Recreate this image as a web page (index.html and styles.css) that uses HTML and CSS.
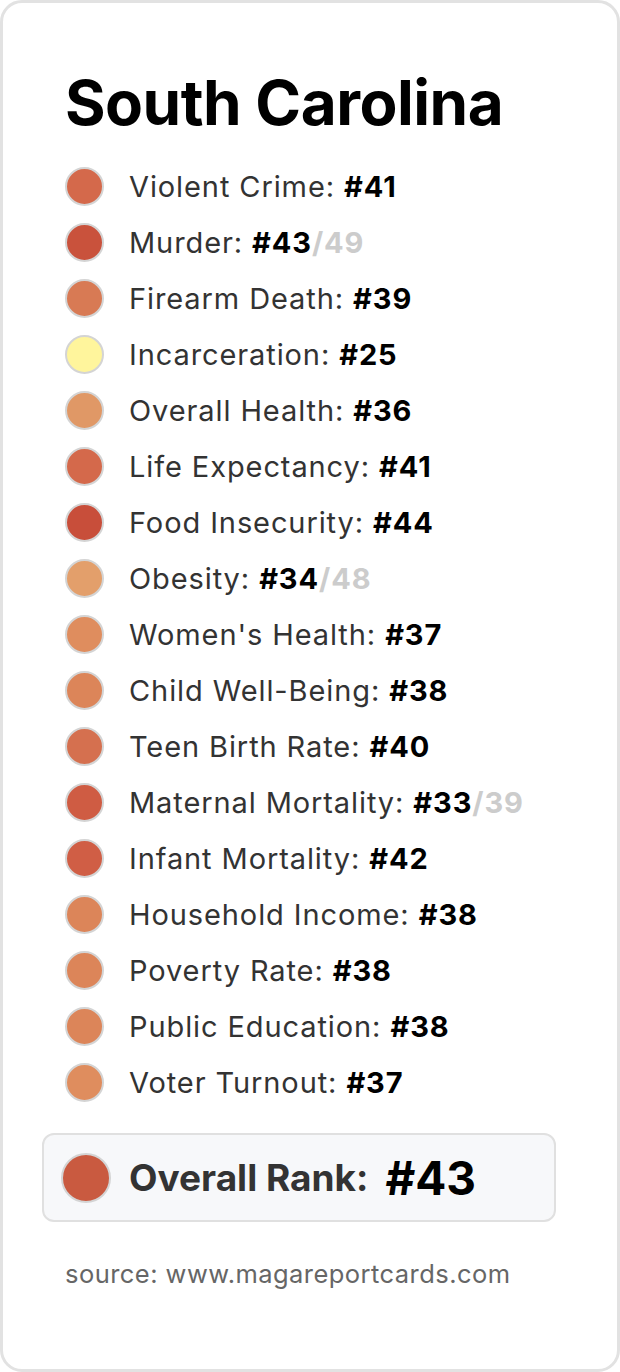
FILE: index.html
```html
<!DOCTYPE html>
<html lang="en">
<head>
<meta charset="utf-8">
<title>South Carolina</title>
<link rel="stylesheet" href="styles.css">
</head>
<body>
<div class="card">
  <h1 class="title">South Carolina</h1>
  <ul class="list">
    <li class="row"><span class="dot" style="background:#d4694b"></span><span class="label">Violent Crime: <b>#41</b></span></li>
    <li class="row"><span class="dot" style="background:#c9523c"></span><span class="label">Murder: <b>#43</b><span class="of">/49</span></span></li>
    <li class="row"><span class="dot" style="background:#d87a54"></span><span class="label">Firearm Death: <b>#39</b></span></li>
    <li class="row"><span class="dot" style="background:#fff59c"></span><span class="label">Incarceration: <b>#25</b></span></li>
    <li class="row"><span class="dot" style="background:#e09866"></span><span class="label">Overall Health: <b>#36</b></span></li>
    <li class="row"><span class="dot" style="background:#d4694b"></span><span class="label">Life Expectancy: <b>#41</b></span></li>
    <li class="row"><span class="dot" style="background:#c84e3a"></span><span class="label">Food Insecurity: <b>#44</b></span></li>
    <li class="row"><span class="dot" style="background:#e39f6b"></span><span class="label">Obesity: <b>#34</b><span class="of">/48</span></span></li>
    <li class="row"><span class="dot" style="background:#df8d5e"></span><span class="label">Women's Health: <b>#37</b></span></li>
    <li class="row"><span class="dot" style="background:#dc8559"></span><span class="label">Child Well-Being: <b>#38</b></span></li>
    <li class="row"><span class="dot" style="background:#d5704f"></span><span class="label">Teen Birth Rate: <b>#40</b></span></li>
    <li class="row"><span class="dot" style="background:#cf5c43"></span><span class="label">Maternal Mortality: <b>#33</b><span class="of">/39</span></span></li>
    <li class="row"><span class="dot" style="background:#d05e45"></span><span class="label">Infant Mortality: <b>#42</b></span></li>
    <li class="row"><span class="dot" style="background:#dc8559"></span><span class="label">Household Income: <b>#38</b></span></li>
    <li class="row"><span class="dot" style="background:#dc8559"></span><span class="label">Poverty Rate: <b>#38</b></span></li>
    <li class="row"><span class="dot" style="background:#dc8559"></span><span class="label">Public Education: <b>#38</b></span></li>
    <li class="row"><span class="dot" style="background:#df8d5e"></span><span class="label">Voter Turnout: <b>#37</b></span></li>
  </ul>
  <div class="overall">
    <span class="dot dot-lg" style="background:#c95a40"></span>
    <span class="overall-label">Overall Rank:</span>
    <span class="overall-rank">#43</span>
  </div>
  <p class="source">source: www.magareportcards.com</p>
</div>
</body>
</html>
```

FILE: styles.css
```css
html, body {
  margin: 0;
  padding: 0;
  background: #ffffff;
}

body {
  font-family: Inter, "Noto Sans", sans-serif;
  color: #333333;
}

.card {
  box-sizing: border-box;
  width: 620px;
  height: 1372px;
  border: 3px solid #e2e2e2;
  border-radius: 22px;
  background: #ffffff;
  padding: 62px 40px 0 39px;
}

.title {
  margin: 0 0 0 23px;
  font-size: 62px;
  line-height: 76px;
  font-weight: 700;
  color: #000000;
  letter-spacing: -0.5px;
}

.list {
  list-style: none;
  margin: 17px 0 0 0;
  padding: 0 0 0 23px;
}

.row {
  display: flex;
  align-items: center;
  height: 56px;
}

.dot {
  flex: none;
  box-sizing: border-box;
  width: 39px;
  height: 39px;
  border-radius: 50%;
  border: 2px solid #d4d4d4;
}

.label {
  margin-left: 25px;
  font-size: 29px;
  letter-spacing: 0.9px;
  color: #333333;
}

.label b {
  font-weight: 700;
  color: #000000;
}

.of {
  font-weight: 700;
  color: #cccccc;
}

.overall {
  box-sizing: border-box;
  display: flex;
  align-items: center;
  width: 514px;
  height: 89px;
  margin: 23px 0 0 0;
  padding: 0 0 0 17px;
  background: #f7f8fa;
  border: 2px solid #e0e0e0;
  border-radius: 12px;
}

.dot-lg {
  width: 50px;
  height: 50px;
}

.overall-label {
  margin-left: 18px;
  font-size: 37px;
  font-weight: 700;
  color: #333333;
}

.overall-rank {
  margin-left: 17px;
  font-size: 46px;
  font-weight: 700;
  color: #000000;
}

.source {
  margin: 36px 0 0 23px;
  font-size: 25.5px;
  letter-spacing: 0.45px;
  color: #666666;
}
```
